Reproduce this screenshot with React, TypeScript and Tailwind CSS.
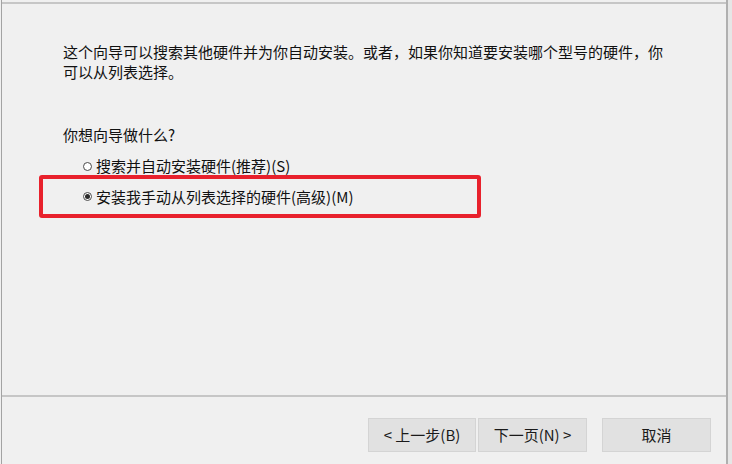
import React from "react";

const font = { fontFamily: '"Microsoft YaHei", "Noto Sans CJK SC", "Noto Sans", sans-serif' };

function Radio({ checked }: { checked?: boolean }) {
  return (
    <span className="inline-flex items-center justify-center w-[9px] h-[9px] rounded-full border border-[#4a4a4a] bg-white mr-[4px] shrink-0">
      {checked && <span className="block w-[5px] h-[5px] rounded-full bg-[#2a2a2a]" />}
    </span>
  );
}

function Btn({ children, className = "" }: { children: React.ReactNode; className?: string }) {
  return (
    <div
      className={
        "h-[34px] w-[108px] flex items-center justify-center bg-[#e1e1e1] border border-[#d4d4d4] text-[15px] text-[#1a1a1a] " +
        className
      }
    >
      {children}
    </div>
  );
}

export default function App() {
  return (
    <div className="w-[732px] h-[464px] bg-[#f0f0f0] flex text-[#111]" style={font}>
      <div className="w-px shrink-0" />
      <div className="flex-1 flex flex-col border-l border-[#a3a3a3]">
        <div className="mt-[2px] h-[2px] bg-[#c6c6c6] shrink-0" />
        <div className="flex-1 flex flex-col pl-[37px]">
          <div className="mt-[38px] pl-[24px] pr-[20px] text-[15px] leading-[20px]">
            这个向导可以搜索其他硬件并为你自动安装。或者，如果你知道要安装哪个型号的硬件，你
            <br />
            可以从列表选择。
          </div>
          <div className="mt-[43px] pl-[24px] text-[15px] leading-[20px]">你想向导做什么?</div>
          <div className="mt-[12px] pl-[44px] flex items-center text-[15px] leading-[18px]">
            <Radio />
            <span>搜索并自动安装硬件(推荐)(S)</span>
          </div>
          <div className="w-[442px] h-[43px] border-4 border-[#e8212c] rounded-[3px] pl-[40px] flex items-center text-[15px] leading-[18px]">
            <Radio checked />
            <span>安装我手动从列表选择的硬件(高级)(M)</span>
          </div>
        </div>
        <div className="h-[2px] bg-[#c6c6c6] shrink-0" />
        <div className="h-[67px] flex items-start justify-end pr-[15px] pt-[21px] shrink-0">
          <Btn>&lt; 上一步(B)</Btn>
          <Btn className="ml-[2px] w-[109px]">下一页(N) &gt;</Btn>
          <Btn className="ml-[15px] w-[109px]">取消</Btn>
        </div>
      </div>
      <div className="w-[2px] bg-[#b0b0b0] shrink-0" />
      <div className="w-[4px] bg-[#e6e6e6] shrink-0" />
    </div>
  );
}
